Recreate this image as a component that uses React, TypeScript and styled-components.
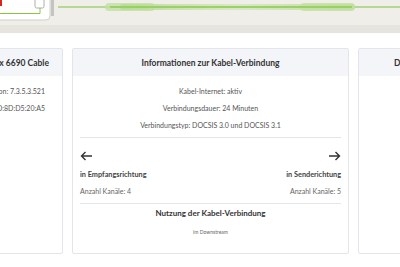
import React from "react";
import styled, { createGlobalStyle } from "styled-components";

const Global = createGlobalStyle`
  html, body { margin: 0; padding: 0; background: #ffffff; }
  body { font-family: Lato, "Noto Sans", sans-serif; color: #444; overflow: hidden; }
`;

const Page = styled.div`
  width: 400px;
  height: 267px;
  overflow: hidden;
  display: flex;
  flex-direction: column;
`;

const Diagram = styled.div`
  height: 25px;
  background: #f0eee8;
  display: flex;
`;

const Band = styled.div`
  height: 8px;
  background: #e5e4de;
`;

const Content = styled.div`
  padding-top: 15px;
  display: flex;
`;

const CardRow = styled.div`
  display: flex;
  gap: 9px;
  margin-left: -214px;
`;

const Card = styled.section`
  width: 277px;
  height: 206px;
  flex: none;
  box-sizing: border-box;
  border: 1px solid #e2e5e9;
  border-radius: 2px;
  background: #fff;
  display: flex;
  flex-direction: column;
`;

const CardHeader = styled.header<{ $align?: string; $pad?: string }>`
  height: 27px;
  flex: none;
  background: #f3f5f9;
  display: flex;
  align-items: center;
  justify-content: ${(p) => p.$align || "center"};
  padding: ${(p) => p.$pad || "0 8px"};
  font-weight: 700;
  font-size: 8.5px;
  color: #333;
  white-space: nowrap;
`;

const CardBody = styled.div<{ $align?: string; $pad?: string }>`
  padding: ${(p) => p.$pad || "7px 7px 0"};
  display: flex;
  flex-direction: column;
  align-items: ${(p) => p.$align || "center"};
`;

const Line = styled.div`
  height: 17px;
  line-height: 17px;
  font-size: 7px;
  color: #555;
  white-space: nowrap;
`;

const Divider = styled.div<{ $top: number }>`
  align-self: stretch;
  height: 1px;
  background: #e3e5e8;
  margin-top: ${(p) => p.$top}px;
`;

const Directions = styled.div`
  align-self: stretch;
  display: flex;
  justify-content: space-between;
  padding-top: 11px;
`;

const Direction = styled.div<{ $right?: boolean }>`
  display: flex;
  flex-direction: column;
  align-items: ${(p) => (p.$right ? "flex-end" : "flex-start")};
`;

const ArrowBox = styled.div`
  height: 14px;
  display: flex;
  align-items: center;
  margin-bottom: 3px;
`;

const DirTitle = styled.div`
  height: 17px;
  line-height: 17px;
  font-size: 7.3px;
  font-weight: 700;
  color: #444;
`;

const DirMeta = styled.div`
  height: 17px;
  line-height: 17px;
  font-size: 7px;
  color: #666;
`;

const SubTitle = styled.div`
  margin-top: 1px;
  height: 17px;
  line-height: 17px;
  font-size: 8px;
  font-weight: 700;
  color: #333;
`;

const Tiny = styled.div`
  margin-top: 6px;
  font-size: 5px;
  line-height: 8px;
  color: #666;
`;

const Arrow = ({ dir }: { dir: "left" | "right" }) => (
  <svg width="13" height="10" viewBox="0 0 13 10">
    {dir === "left" ? (
      <path d="M12 5H1.5M5.5 1L1.5 5L5.5 9" fill="none" stroke="#333" strokeWidth="1.4" />
    ) : (
      <path d="M1 5H11.5M7.5 1L11.5 5L7.5 9" fill="none" stroke="#333" strokeWidth="1.4" />
    )}
  </svg>
);

const CableDiagram = () => (
  <svg width="400" height="25" viewBox="0 0 400 25">
    <defs>
      <linearGradient id="glow" x1="0" x2="1" y1="0" y2="0">
        <stop offset="0" stopColor="#b9dc95" stopOpacity="0.9" />
        <stop offset="0.5" stopColor="#cfe6b6" stopOpacity="0.7" />
        <stop offset="1" stopColor="#b9dc95" stopOpacity="0.9" />
      </linearGradient>
    </defs>
    <rect x="-10" y="-10" width="60" height="30" rx="4" fill="#ffffff" stroke="#cfcfcc" strokeWidth="1" />
    <rect x="-2" y="-2" width="4" height="8" fill="#d9261c" />
    <path d="M0 13.5H40V7" fill="none" stroke="#8cc63f" strokeWidth="1" />
    <rect x="35" y="-2" width="9" height="10" rx="1.5" fill="#ffffff" stroke="#9a9a9a" strokeWidth="0.8" />
    <rect x="51" y="0" width="3" height="16" fill="#c4c4c1" />
    <path d="M58 7H400" stroke="#7dc242" strokeWidth="1" />
    <rect x="105" y="3" width="50" height="8" rx="4" fill="#c3e0a2" opacity="0.8" />
    <rect x="120" y="4" width="235" height="6" rx="3" fill="url(#glow)" />
    <rect x="300" y="3" width="55" height="8" rx="4" fill="#c3e0a2" opacity="0.8" />
    <path d="M110 7H352" stroke="#8ecb55" strokeWidth="1.5" />
  </svg>
);

export default function App() {
  return (
    <Page>
      <Global />
      <Diagram>
        <CableDiagram />
      </Diagram>
      <Band />
      <Content>
        <CardRow>
          <Card>
            <CardHeader $align="flex-end" $pad="0 13px 0 8px">FRITZ!Box 6690 Cable</CardHeader>
            <CardBody $align="flex-end" $pad="7px 17px 0 7px">
              <Line>FRITZ!OS-Version: 7.3.5.3.521</Line>
              <Line>CM-MAC: 44:4E:6D:8D:D5:20:A5</Line>
            </CardBody>
          </Card>
          <Card>
            <CardHeader>Informationen zur Kabel-Verbindung</CardHeader>
            <CardBody>
              <Line>Kabel-Internet: aktiv</Line>
              <Line>Verbindungsdauer: 24 Minuten</Line>
              <Line>Verbindungstyp: DOCSIS 3.0 und DOCSIS 3.1</Line>
              <Divider $top={3} />
              <Directions>
                <Direction>
                  <ArrowBox>
                    <Arrow dir="left" />
                  </ArrowBox>
                  <DirTitle>in Empfangsrichtung</DirTitle>
                  <DirMeta>Anzahl Kanäle: 4</DirMeta>
                </Direction>
                <Direction $right>
                  <ArrowBox>
                    <Arrow dir="right" />
                  </ArrowBox>
                  <DirTitle>in Senderichtung</DirTitle>
                  <DirMeta>Anzahl Kanäle: 5</DirMeta>
                </Direction>
              </Directions>
              <Divider $top={3} />
              <SubTitle>Nutzung der Kabel-Verbindung</SubTitle>
              <Tiny>im Downstream</Tiny>
            </CardBody>
          </Card>
          <Card>
            <CardHeader $align="flex-start" $pad="0 8px 0 35px">Details</CardHeader>
          </Card>
        </CardRow>
      </Content>
    </Page>
  );
}
